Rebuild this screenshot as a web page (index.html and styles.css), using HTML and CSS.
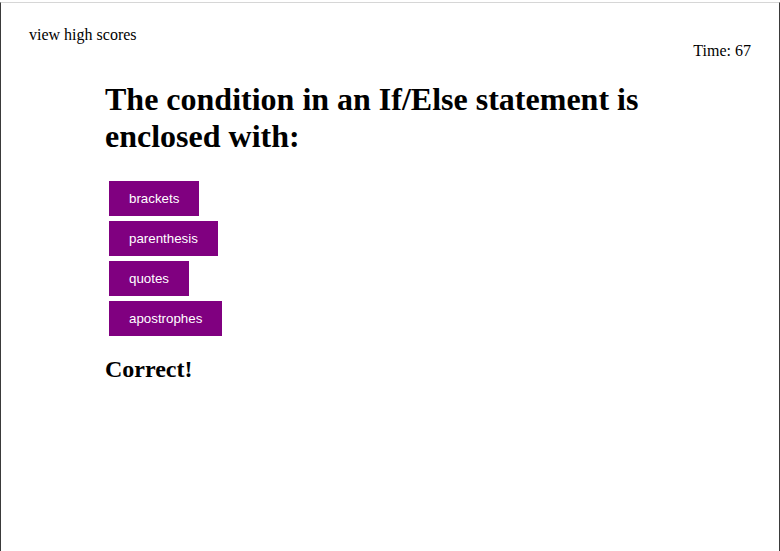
FILE: index.html
```html
<!DOCTYPE html>
<html>
<head>
<meta charset="utf-8">
<link rel="stylesheet" href="styles.css">
</head>
<body>
<div class="frame">
  <header class="top">
    <a class="scores">view high scores</a>
    <div class="timer">Time: 67</div>
  </header>
  <main class="quiz">
    <h1 class="question">The condition in an If/Else statement is enclosed with:</h1>
    <div class="choices">
      <button class="choice">brackets</button>
      <button class="choice">parenthesis</button>
      <button class="choice">quotes</button>
      <button class="choice">apostrophes</button>
    </div>
    <h2 class="result">Correct!</h2>
  </main>
</div>
</body>
</html>
```
FILE: styles.css
```css
html, body {
  margin: 0;
  padding: 0;
  background: #fff;
}
body {
  font-family: "Liberation Serif", "Times New Roman", serif;
  color: #000;
}
.frame {
  box-sizing: border-box;
  width: 780px;
  height: 549px;
  margin-top: 2px;
  border-top: 1px solid #d6d6d6;
  border-left: 1px solid #3a3a3a;
  border-right: 1px solid #3a3a3a;
  overflow: hidden;
}
.top {
  display: flex;
  justify-content: space-between;
  align-items: flex-start;
  padding: 23px 28px 0 28px;
  font-size: 16px;
  line-height: 18px;
}
.scores {
  color: #000;
}
.timer {
  margin-top: 16px;
}
.quiz {
  margin-left: 104px;
  width: 600px;
}
.question {
  font-size: 32px;
  line-height: 37px;
  font-weight: bold;
  margin: 21px 0 26px 0;
}
.choices {
  display: flex;
  flex-direction: column;
  align-items: flex-start;
  gap: 5px;
  margin-left: 4px;
}
.choice {
  background: #800080;
  color: #fff;
  border: none;
  font-family: "Liberation Sans", Arial, sans-serif;
  font-size: 13.333px;
  line-height: 15px;
  padding: 10px 20px;
  margin: 0;
}
.result {
  font-size: 24px;
  line-height: 28px;
  font-weight: bold;
  margin: 19px 0 0 0;
}
```
